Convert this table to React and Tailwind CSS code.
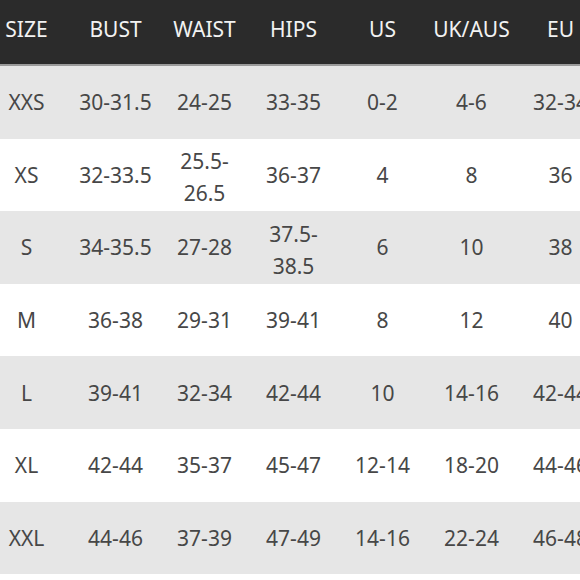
import React from 'react';

const HEADERS = ['SIZE', 'BUST', 'WAIST', 'HIPS', 'US', 'UK/AUS', 'EU'];

const ROWS = [
  ['XXS', '30-31.5', '24-25', '33-35', '0-2', '4-6', '32-34'],
  ['XS', '32-33.5', ['25.5-', '26.5'], '36-37', '4', '8', '36'],
  ['S', '34-35.5', '27-28', ['37.5-', '38.5'], '6', '10', '38'],
  ['M', '36-38', '29-31', '39-41', '8', '12', '40'],
  ['L', '39-41', '32-34', '42-44', '10', '14-16', '42-44'],
  ['XL', '42-44', '35-37', '45-47', '12-14', '18-20', '44-46'],
  ['XXL', '44-46', '37-39', '47-49', '14-16', '22-24', '46-48'],
];

const SizeChart = () => {
  return (
    <div className="w-[580px] h-[580px] overflow-hidden bg-white" style={{ fontFamily: '"Noto Sans", sans-serif' }}>
      <div className="ml-[-18px] w-[623px]">
        {/* Header */}
        <div className="grid grid-cols-[repeat(7,89px)] h-[66px] bg-[#2b2b2b] border-b-2 border-[#9a9a9a] items-center pb-[6px]">
          {HEADERS.map((h) => (
            <div key={h} className="text-center text-[21px] text-[#f2f2f2] leading-none whitespace-nowrap">{h}</div>
          ))}
        </div>

        {/* Rows */}
        {ROWS.map((row, i) => (
          <div
            key={row[0]}
            className={`grid grid-cols-[repeat(7,89px)] h-[72.6px] items-center ${i % 2 === 0 ? 'bg-[#e6e6e6]' : 'bg-white'}`}
          >
            {row.map((cell, j) => (
              <div key={j} className="text-center text-[21px] text-[#474747] leading-[32px] whitespace-nowrap">
                {Array.isArray(cell) ? (
                  <div className="pt-[5px]">
                    <div>{cell[0]}</div>
                    <div>{cell[1]}</div>
                  </div>
                ) : (
                  cell
                )}
              </div>
            ))}
          </div>
        ))}
      </div>
    </div>
  );
};

export default function App() {
  return <SizeChart />;
}
